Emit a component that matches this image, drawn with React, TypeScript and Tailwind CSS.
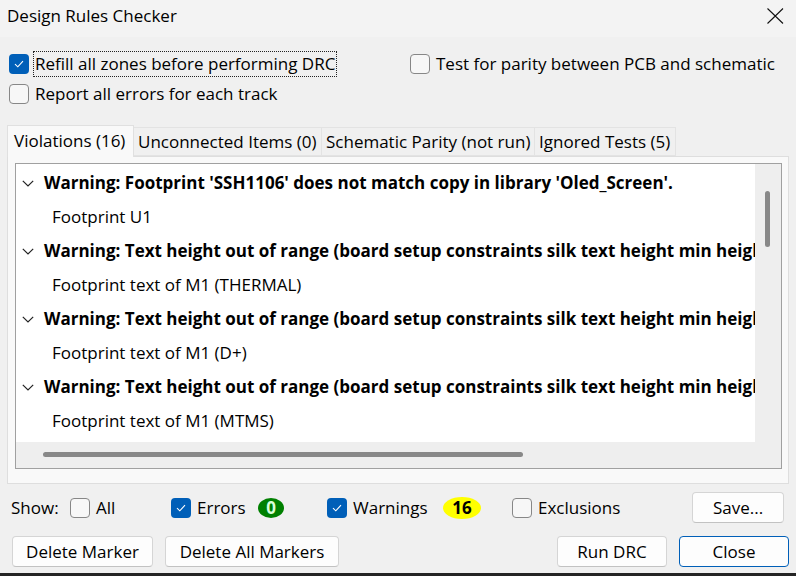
import { useState } from "react";

const font = "font-['Open_Sans','Noto_Sans',sans-serif]";

function Box({ checked }: { checked: boolean }) {
  return checked ? (
    <span className="w-[20px] h-[20px] rounded-[4px] bg-[#005fb8] flex items-center justify-center shrink-0">
      <svg width="10" height="8" viewBox="0 0 10 8" fill="none">
        <path d="M1 4.2L3.8 6.8L9 1.2" stroke="white" strokeWidth="1.1" />
      </svg>
    </span>
  ) : (
    <span className="w-[20px] h-[20px] rounded-[4px] border border-[#878787] bg-[#f7f7f7] shrink-0" />
  );
}

function Check({
  label,
  checked = false,
  focused = false,
  className = "",
}: {
  label: string;
  checked?: boolean;
  focused?: boolean;
  className?: string;
}) {
  return (
    <div className={`flex items-center ${className}`}>
      <Box checked={checked} />
      {focused ? (
        <span className="ml-[4px] h-[26px] flex items-center border border-dotted border-[#222] pl-px pr-[1px]">
          {label}
        </span>
      ) : (
        <span className="ml-[6px]">{label}</span>
      )}
    </div>
  );
}

function Chevron() {
  return (
    <svg width="12" height="7" viewBox="0 0 12 7" fill="none" className="shrink-0">
      <path d="M0.8 0.8L6 6L11.2 0.8" stroke="#222" strokeWidth="1.2" />
    </svg>
  );
}

function Btn({ label, w, primary = false }: { label: string; w: string; primary?: boolean }) {
  return (
    <button
      className={`${w} h-[31px] rounded-[4px] bg-[#fdfdfd] flex items-center justify-center border ${
        primary ? "border-[#005fb8]" : "border-[#d5d5d5] border-b-[#c2c2c2]"
      }`}
    >
      {label}
    </button>
  );
}

// long DRC messages are cut off by the list's right edge, as in KiCad
const violations = [
  {
    title: "Warning: Footprint 'SSH1106' does not match copy in library 'Oled_Screen'.",
    item: "Footprint U1",
  },
  {
    title: "Warning: Text height out of range (board setup constraints silk text height min height 0.8 mm)",
    item: "Footprint text of M1 (THERMAL)",
  },
  {
    title: "Warning: Text height out of range (board setup constraints silk text height min height 0.8 mm)",
    item: "Footprint text of M1 (D+)",
  },
  {
    title: "Warning: Text height out of range (board setup constraints silk text height min height 0.8 mm)",
    item: "Footprint text of M1 (MTMS)",
  },
];

const tabs = [
  { label: "Violations (16)", w: "w-[127px]" },
  { label: "Unconnected Items (0)", w: "w-[188px]" },
  { label: "Schematic Parity (not run)", w: "w-[213px]" },
  { label: "Ignored Tests (5)", w: "w-[141px]" },
];

export default function App() {
  const [tab, setTab] = useState(0);

  return (
    <div className={`w-[796px] h-[576px] bg-[#f0f0f0] text-[17px] text-black overflow-hidden flex flex-col ${font}`}>
      {/* Title bar */}
      <div className="h-[37px] bg-[#f3f3f3] flex items-start justify-between shrink-0">
        <span className="ml-[7px] mt-[3px]">Design Rules Checker</span>
        <svg width="17" height="16" viewBox="0 0 17 16" className="mt-[8px] mr-[12px]">
          <path d="M0.5 0.5L16 15.5M16 0.5L0.5 15.5" stroke="#111" strokeWidth="1.1" />
        </svg>
      </div>

      {/* Options */}
      <div className="flex mt-[12px] ml-[9px]">
        <div className="w-[401px]">
          <Check label="Refill all zones before performing DRC" checked focused className="h-[30px]" />
          <Check label="Report all errors for each track" className="h-[30px]" />
        </div>
        <Check label="Test for parity between PCB and schematic" className="h-[30px]" />
      </div>

      {/* Tabs */}
      <div className="flex items-end h-[31px] mt-[16px] ml-[7px] relative z-10">
        {tabs.map((t, i) =>
          i === tab ? (
            <button
              key={t.label}
              onClick={() => setTab(i)}
              className={`${t.w} h-[32px] -mb-px bg-[#f9f9f9] border border-b-0 border-[#e0e0e0] text-left pl-[6px] pb-[2px] whitespace-nowrap`}
            >
              {t.label}
            </button>
          ) : (
            <button
              key={t.label}
              onClick={() => setTab(i)}
              className={`${t.w} h-[29px] bg-[#f0f0f0] border border-l-0 border-[#e3e3e3] text-left pl-[4px] pt-[1px] whitespace-nowrap`}
            >
              {t.label}
            </button>
          )
        )}
      </div>

      {/* Tab panel */}
      <div className="ml-[7px] w-[782px] h-[328px] bg-[#f9f9f9] border border-[#dedede] shrink-0">
        <div className="ml-[7px] mt-[6px] w-[767px] h-[306px] border border-[#a0a0a0] flex flex-col">
          <div className="flex h-[278px]">
            <div className="flex-1 bg-white overflow-hidden pt-[2px]">
              {violations.map((v, i) => (
                <div key={i}>
                  <div className="h-[34px] flex items-center pl-[6px] whitespace-nowrap">
                    <Chevron />
                    <span className="ml-[10px] font-bold">{v.title}</span>
                  </div>
                  <div className="h-[34px] flex items-center pl-[36px] whitespace-nowrap">{v.item}</div>
                </div>
              ))}
            </div>
            <div className="w-[26px] bg-[#eeeeee]">
              <div className="ml-[10px] mt-[27px] w-[5px] h-[56px] rounded-full bg-[#888888]" />
            </div>
          </div>
          <div className="h-[26px] bg-[#eeeeee] pt-[10px]">
            <div className="ml-[27px] w-[480px] h-[5px] rounded-full bg-[#888888]" />
          </div>
        </div>
      </div>

      {/* Show filters */}
      <div className="flex items-center h-[31px] mt-[8px]">
        <span className="ml-[11px] w-[59px]">Show:</span>
        <Check label="All" className="w-[101px]" />
        <Check label="Errors" checked className="w-[87px]" />
        <span className="w-[26px] h-[20px] rounded-[50%] bg-[#008000] text-[#d8ffd8] font-bold flex items-center justify-center">
          0
        </span>
        <Check label="Warnings" checked className="ml-[43px] w-[116px]" />
        <span className="w-[38px] h-[22px] rounded-[50%] bg-[#ffff00] font-bold flex items-center justify-center">
          16
        </span>
        <Check label="Exclusions" className="ml-[31px]" />
        <div className="ml-auto mr-[12px]">
          <Btn label="Save..." w="w-[92px]" />
        </div>
      </div>

      {/* Buttons */}
      <div className="flex items-center mt-[13px]">
        <div className="ml-[12px]">
          <Btn label="Delete Marker" w="w-[141px]" />
        </div>
        <div className="ml-[12px]">
          <Btn label="Delete All Markers" w="w-[174px]" />
        </div>
        <div className="ml-auto flex gap-[12px] mr-[7px]">
          <Btn label="Run DRC" w="w-[110px]" />
          <Btn label="Close" w="w-[110px]" primary />
        </div>
      </div>

      <div className="flex-1" />
      <div className="h-[3px] bg-[#242424] shrink-0" />
    </div>
  );
}
